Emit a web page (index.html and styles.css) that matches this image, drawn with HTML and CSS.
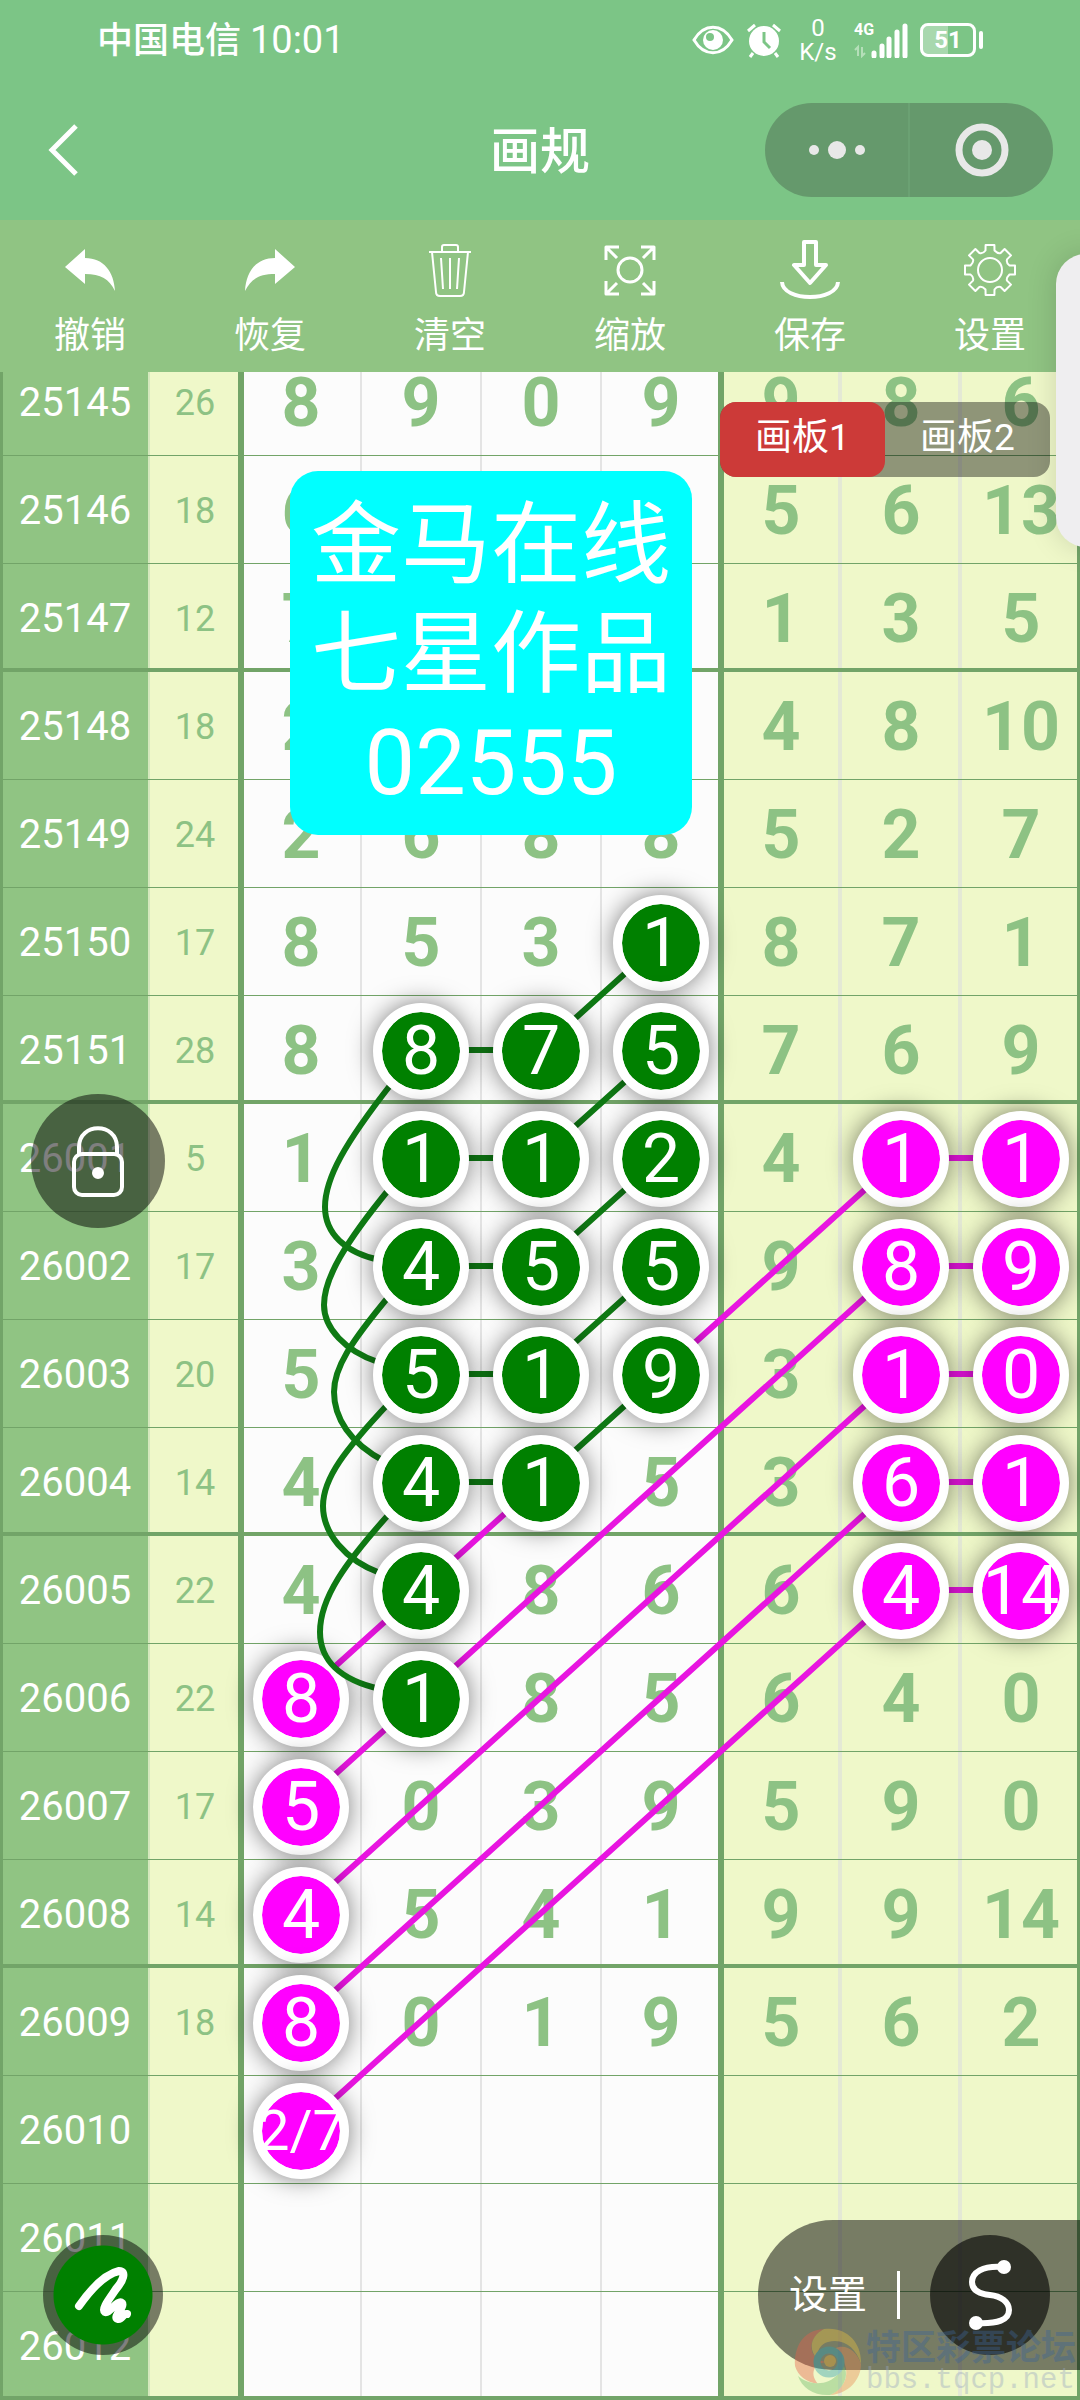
FILE: index.html
```html
<!doctype html>
<html lang="zh-CN">
<head>
  <meta charset="utf-8">
  <meta name="viewport" content="width=device-width">
  <title>画规</title>
  <link rel="stylesheet" href="styles.css">
</head>
<body>

<div class="page">
  <header class="header">
    <div class="status">
      <div class="carrier"><b>中国电信</b> <span>10:01</span></div>
      <div class="status-icons">
        <svg width="42" height="34" viewBox="0 0 42 34">
          <path d="M2 17C12 0 30 0 40 17C30 34 12 34 2 17Z" fill="none" stroke="#fff" stroke-width="3"/>
          <circle cx="21" cy="17" r="10" fill="#fff"/>
          <circle cx="18" cy="14" r="4" fill="#7cc586"/>
        </svg>
        <svg width="36" height="36" viewBox="0 0 36 36">
          <circle cx="18" cy="19" r="15" fill="#fff"/>
          <path d="M2 9L9 3M34 9L27 3M7 31L4 35M29 31L32 35" stroke="#fff" stroke-width="3"/>
          <path d="M18 10V20L24 26" fill="none" stroke="#7cc586" stroke-width="3"/>
        </svg>
        <div class="speed"><span>0</span><span>K/s</span></div>
        <div class="signal">
          <span>4G</span>
          <svg width="54" height="36" viewBox="0 0 54 36">
            <path d="M20 34V31M28 34V24M35 34V17M43 34V10M51 34V4" stroke="#fff" stroke-width="5" stroke-linecap="round"/>
            <path d="M4 34V25L1 28M8 25V34L11 31" fill="none" stroke="#b5dfb9" stroke-width="2"/>
          </svg>
        </div>
        <div class="battery"><span>51</span></div>
      </div>
    </div>
    <div class="navbar">
      <button class="back" aria-label="返回">
        <svg width="32" height="52" viewBox="0 0 32 52"><path d="M29 2L5 26L29 50" fill="none" stroke="#fff" stroke-width="5"/></svg>
      </button>
      <h1>画规</h1>
      <div class="capsule">
        <button aria-label="更多">
          <svg width="60" height="54" viewBox="0 0 60 54" fill="#e8e8e8"><circle cx="7" cy="27" r="5"/><circle cx="30" cy="27" r="9"/><circle cx="53" cy="27" r="5"/></svg>
        </button>
        <button aria-label="关闭">
          <svg width="54" height="54" viewBox="0 0 54 54"><circle cx="27" cy="27" r="23" fill="none" stroke="#e8e8e8" stroke-width="7"/><circle cx="27" cy="27" r="10" fill="#e8e8e8"/></svg>
        </button>
      </div>
    </div>
  </header>

  <nav class="toolbar">
    <button>
      <svg viewBox="0 0 60 60"><path d="M5 27L25 9V18C44 18 54 32 55 51C49 39 41 34 25 34V44Z" fill="#fff"/></svg>
      撤销
    </button>
    <button>
      <svg viewBox="0 0 60 60"><path d="M55 27L35 9V18C16 18 6 32 5 51C11 39 19 34 35 34V44Z" fill="#fff"/></svg>
      恢复
    </button>
    <button>
      <svg viewBox="0 0 60 60" class="line">
        <path d="M9 12H51M22 12V7Q22 5 24 5H36Q38 5 38 7V12M12 12L16 52Q16 56 20 56H40Q44 56 44 52L48 12M21 18L23 49M30 18V49M39 18L37 49"/>
      </svg>
      清空
    </button>
    <button>
      <svg viewBox="0 0 60 60" class="line mid">
        <circle cx="30" cy="30" r="12"/>
        <path d="M6 20V7H19M7 8L17 18M41 7H54V20M53 8L43 18M6 41V54H19M7 53L17 43M41 54H54V41M53 53L43 43"/>
      </svg>
      缩放
    </button>
    <button>
      <svg viewBox="0 0 60 60" class="line bold">
        <path d="M24 2H36V25H46L30 43L14 25H24ZM2 42C3 62 57 62 58 42"/>
      </svg>
      保存
    </button>
    <button>
      <svg viewBox="0 0 60 60" class="line">
        <circle cx="30" cy="30" r="12"/>
        <path d="M25.5 10.5L25.6 5H34.4L34.5 10.5Q38 14 40.6 13L44.6 9L51 15.4L47 19.4Q46 23 49.5 25.5L55 25.6V34.4L49.5 34.5Q46 38 47 40.6L51 44.6L44.6 51L40.6 47Q37 46 34.5 49.5L34.4 55H25.6L25.5 49.5Q22 46 19.4 47L15.4 51L9 44.6L13 40.6Q14 37 10.5 34.5L5 34.4V25.6L10.5 25.5Q14 22 13 19.4L9 15.4L15.4 9L19.4 13Q23 14 25.5 10.5Z"/>
      </svg>
      设置
    </button>
  </nav>

  <main class="board">
    <div class="sheet">
      <table>
        <colgroup>
          <col class="col-issue"><col class="col-sum">
          <col><col><col><col><col><col><col>
        </colgroup>
        <tbody id="rows"></tbody>
      </table>
      <svg class="lines pink" viewBox="0 0 1080 2052" preserveAspectRatio="none">
        <path d="M900 810H1020M900 918H1020M900 1026H1020M900 1134H1020M900 1242H1020"/>
        <path d="M900 810L660 1026M540 1134L300 1350M900 918L300 1458M900 1026L300 1566M900 1134L300 1674M900 1242L300 1782"/>
      </svg>
      <svg class="lines green" viewBox="0 0 1080 2052" preserveAspectRatio="none">
        <path d="M420 702H540M420 810H540M420 918H540M420 1026H540M420 1134H540"/>
        <path d="M660 594L540 702M660 702L540 810M660 810L540 918M660 918L540 1026M660 1026L540 1134"/>
        <path d="M392 735C345 795 325 830 325 859C325 885 345 905 380 912"/>
        <path d="M390 840C345 895 324 930 324 957C324 980 345 1003 378 1014"/>
        <path d="M390 947C350 995 334 1020 334 1044C334 1070 350 1095 384 1113"/>
        <path d="M389 1055C345 1102 323 1130 323 1158C323 1185 345 1212 380 1225"/>
        <path d="M390 1165C345 1215 320 1250 320 1284C320 1312 340 1332 380 1341"/>
      </svg>
    </div>

    <div class="note">金马在线<br>七星作品<br>02555</div>

    <div class="tabs">
      <button class="active">画板1</button>
      <button>画板2</button>
    </div>

    <button class="lock" aria-label="锁定">
      <svg width="134" height="134" viewBox="0 0 134 134" class="line bold">
        <rect x="43" y="60" width="48" height="41" rx="8"/>
        <path d="M48 60V53C48 28 86 28 86 53V60"/>
        <circle cx="67" cy="79" r="4" fill="#fff"/>
      </svg>
    </button>

    <button class="pen" aria-label="画笔">
      <svg width="120" height="120" viewBox="0 0 120 120">
        <path d="M36 71C48 54 62 39 76 36C84 36 80 46 73 54C67 63 58 74 62 77C66 79 75 64 79 68C82 72 69 82 75 84C79 85 80 78 84 79" fill="none" stroke="#fff" stroke-width="8" stroke-linecap="round" stroke-linejoin="round"/>
      </svg>
    </button>

    <div class="settings">
      <button class="settings-text">设置</button>
      <button class="curve" aria-label="曲线">
        <svg width="120" height="120" viewBox="0 0 120 120">
          <path d="M74 32C52 30 42 38 42 47C42 56 50 59 60 60C71 61 79 67 79 75C79 85 68 89 46 88" fill="none" stroke="#fff" stroke-width="6"/>
          <circle cx="74" cy="32" r="7" fill="#fff"/>
          <circle cx="46" cy="88" r="7" fill="#fff"/>
        </svg>
      </button>
    </div>

    <div class="watermark">
      <svg width="68" height="68" viewBox="0 0 68 68">
        <path d="M34 34C16 34 10 12 30 1C8 2 0 20 1 38C4 48 12 54 24 56C14 44 22 34 34 34Z" fill="#e8604a"/>
        <path d="M30 1C52 -2 68 14 67 36C62 20 50 10 34 14C26 16 22 24 24 32C14 22 16 8 30 1Z" fill="#e9c040"/>
        <path d="M67 36C67 52 54 66 36 67C50 60 56 48 50 34C47 26 40 23 34 26C46 12 62 20 67 36Z" fill="#e88a50"/>
        <path d="M36 67C20 68 8 60 4 48C16 58 34 58 44 46C48 40 46 34 42 32C58 38 54 60 36 67Z" fill="#6cb86a"/>
        <circle cx="35" cy="34" r="12" fill="none" stroke="#2e9fb0" stroke-width="7"/>
        <circle cx="36" cy="33" r="6" fill="#f0b030"/>
      </svg>
      <div><b>特区彩票论坛</b><span>bbs.tqcp.net</span></div>
    </div>
  </main>

  <div class="drawer"></div>
</div>

<script>
  // g = 绿色圆圈, p = 粉色圆圈, - = 空
  const data = [
    ['25145', 26, '8 9 0 9 9 8 6'],
    ['25146', 18, '6 - - - 5 6 13'],
    ['25147', 12, '7 - - - 1 3 5'],
    ['25148', 18, '2 - - - 4 8 10'],
    ['25149', 24, '2 6 8 8 5 2 7'],
    ['25150', 17, '8 5 3 g1 8 7 1'],
    ['25151', 28, '8 g8 g7 g5 7 6 9'],
    ['26001', 5, '1 g1 g1 g2 4 p1 p1'],
    ['26002', 17, '3 g4 g5 g5 9 p8 p9'],
    ['26003', 20, '5 g5 g1 g9 3 p1 p0'],
    ['26004', 14, '4 g4 g1 5 3 p6 p1'],
    ['26005', 22, '4 g4 8 6 6 p4 p14'],
    ['26006', 22, 'p8 g1 8 5 6 4 0'],
    ['26007', 17, 'p5 0 3 9 5 9 0'],
    ['26008', 14, 'p4 5 4 1 9 9 14'],
    ['26009', 18, 'p8 0 1 9 5 6 2'],
    ['26010', '', 'p2/7 - - - - - -'],
    ['26011', '', '- - - - - - -'],
    ['26012', '', '- - - - - - -']
  ]
  const thick = ['25147', '25151', '26004', '26008', '26012']

  function cell(value) {
    if (value === '-') return '<td></td>'
    const kind = { g: 'green', p: 'pink' }[value[0]]
    if (!kind) return `<td>${value}</td>`
    const text = value.slice(1)
    const small = text.includes('/') ? ' small' : ''
    return `<td><span class="mark ${kind}${small}">${text}</span></td>`
  }

  document.getElementById('rows').innerHTML = data.map(([issue, sum, nums]) => `
    <tr class="${thick.includes(issue) ? 'thick' : ''}">
      <th scope="row">${issue}</th>
      <td class="sum">${sum}</td>
      ${nums.split(' ').map(cell).join('')}
    </tr>
  `).join('')
</script>

</body>
</html>
```
FILE: styles.css
```css
* {
  box-sizing: border-box;
}
body {
  margin: 0;
  font-family: Roboto, "Noto Sans CJK SC", sans-serif;
  color: #fff;
}
button {
  border: 0;
  padding: 0;
  background: none;
  color: inherit;
  font: inherit;
}
svg {
  display: block;
}
.line {
  fill: none;
  stroke: #fff;
  stroke-width: 2;
  stroke-linejoin: round;
}
.line.mid {
  stroke-width: 3;
}
.line.bold {
  stroke-width: 4;
}
.page {
  position: relative;
  height: 100vh;
  display: flex;
  flex-direction: column;
  overflow: hidden;
}

/* header */
.header {
  height: 220px;
  background: #7cc586;
}
.status {
  height: 80px;
  padding: 0 97px;
  display: flex;
  align-items: center;
  justify-content: space-between;
}
.carrier {
  font-size: 36px;
  line-height: 44px;
}
.carrier b {
  font-weight: 500;
}
.carrier span {
  font-size: 38px;
}
.status-icons {
  display: flex;
  align-items: center;
  gap: 12px;
}
.speed {
  width: 48px;
  display: flex;
  flex-direction: column;
  align-items: center;
  font-size: 24px;
  line-height: 24px;
}
.signal {
  position: relative;
}
.signal span {
  position: absolute;
  left: 0;
  top: 0;
  font-size: 16px;
  line-height: 16px;
  font-weight: 700;
}
.battery {
  position: relative;
  width: 56px;
  height: 34px;
  margin-right: 7px;
  border: 3px solid #fff;
  border-radius: 8px;
  background: linear-gradient(90deg, #a8d8ae 50%, transparent 50%);
  font-size: 24px;
  line-height: 28px;
  font-weight: 700;
  text-align: center;
}
.battery::after {
  content: "";
  position: absolute;
  right: -10px;
  top: 5px;
  width: 4px;
  height: 18px;
  border-radius: 2px;
  background: #fff;
}
.navbar {
  height: 140px;
  padding: 0 27px;
  display: grid;
  grid-template-columns: 1fr auto 1fr;
  align-items: center;
}
.back {
  justify-self: start;
  padding-left: 20px;
}
h1 {
  margin: 0;
  padding-top: 4px;
  font-size: 50px;
  line-height: 64px;
  font-weight: 500;
}
.capsule {
  justify-self: end;
  width: 288px;
  height: 94px;
  border-radius: 47px;
  background: #65996c;
  display: flex;
}
.capsule button {
  flex: 1;
  display: flex;
  align-items: center;
  justify-content: center;
}
.capsule button + button {
  border-left: 2px solid #6ba173;
}

/* toolbar */
.toolbar {
  height: 152px;
  background: #90c483;
  display: flex;
}
.toolbar button {
  flex: 1;
  display: flex;
  flex-direction: column;
  align-items: center;
  padding-top: 20px;
  gap: 10px;
  font-size: 36px;
  line-height: 52px;
}
.toolbar svg {
  width: 60px;
  height: 60px;
}

/* table */
.board {
  position: relative;
  flex: 1;
  min-height: 0;
  overflow: hidden;
  display: flex;
  flex-direction: column;
  justify-content: flex-end;
}
.sheet {
  position: relative;
  z-index: 0;
  flex-shrink: 0;
}
table {
  width: 100%;
  table-layout: fixed;
  border-collapse: separate;
  border-spacing: 0;
}
.col-issue {
  width: 148px;
}
.col-sum {
  width: 92px;
}
tr {
  --h: -1px;
}
tr.thick {
  --h: -4px;
}
th, td {
  height: 108px;
  padding: 2px 0 0 2px;
  text-align: center;
  white-space: nowrap;
}
th {
  background: #90c483;
  font-size: 40px;
  line-height: 48px;
  font-weight: 400;
  box-shadow: inset 3px 0 #72a468, inset 0 var(--h) #72a468;
}
td {
  background: #fcfcfc;
  color: #8dc284;
  font-size: 68px;
  line-height: 76px;
  font-weight: 700;
  box-shadow: inset 0 var(--h) #72a468, inset 2px 0 #e4e4e4;
}
td.sum {
  background: #eff8c9;
  font-size: 36px;
  line-height: 44px;
  font-weight: 400;
  box-shadow: inset -2px 0 #72a468, inset 0 var(--h) #72a468, inset 2px 0 #d5e8bd;
}
td:nth-child(3) {
  box-shadow: inset 4px 0 #72a468, inset 0 var(--h) #72a468;
}
td:nth-child(6) {
  box-shadow: inset -2px 0 #72a468, inset 0 var(--h) #72a468, inset 2px 0 #e4e4e4;
}
td:nth-child(n+7) {
  background: #eff8c9;
  box-shadow: inset 0 var(--h) #72a468, inset 2px 0 #e4e9d5, inset -2px 0 #e4e9d5;
}
td:nth-child(7) {
  box-shadow: inset 4px 0 #72a468, inset 0 var(--h) #72a468, inset -2px 0 #e4e9d5;
}
td:nth-child(9) {
  box-shadow: inset -3px 0 #72a468, inset 0 var(--h) #72a468, inset 2px 0 #e4e9d5;
}

/* drawing */
.mark {
  position: relative;
  width: 96px;
  height: 96px;
  margin: 0 auto;
  border: 9px solid #fff;
  border-radius: 50%;
  box-shadow: 0 0 24px rgba(0, 0, 0, 0.5);
  display: flex;
  align-items: center;
  justify-content: center;
  color: #fff;
  font-weight: 400;
}
.mark.green {
  z-index: 4;
  background: #008000;
  background-clip: padding-box;
}
.mark.pink {
  z-index: 2;
  background: #ff00ff;
  background-clip: padding-box;
}
.mark.small {
  font-size: 56px;
}
.lines {
  position: absolute;
  left: 0;
  top: 0;
  width: 100%;
  height: 100%;
  fill: none;
  stroke-width: 6;
}
.lines.pink {
  z-index: 1;
  stroke: #e815e0;
}
.lines.green {
  z-index: 3;
  stroke: #0f7a14;
}

/* floating controls */
.note {
  position: absolute;
  left: 290px;
  top: 99px;
  padding: 20px 21px 17px;
  border-radius: 28px;
  background: #00ffff;
  font-size: 90px;
  line-height: 109px;
  text-align: center;
}
.tabs {
  position: absolute;
  right: 30px;
  top: 30px;
  display: flex;
  border-radius: 16px;
  background: rgba(0, 0, 0, 0.4);
}
.tabs button {
  width: 165px;
  height: 75px;
  padding-bottom: 4px;
  border-radius: 16px;
  font-size: 37px;
  line-height: 44px;
}
.tabs .active {
  background: #cc3a38;
}
.lock {
  position: absolute;
  left: 31px;
  top: 722px;
  border-radius: 50%;
  background: rgba(0, 0, 0, 0.5);
}
.pen {
  position: absolute;
  left: 43px;
  bottom: 45px;
  border-radius: 50%;
  background: radial-gradient(circle, #008000 49px, rgba(0, 0, 0, 0.5) 50px);
}
.settings {
  position: absolute;
  right: 0;
  bottom: 30px;
  height: 150px;
  padding: 0 30px 0 31px;
  border-radius: 75px 0 0 75px;
  background: rgba(0, 0, 0, 0.5);
  display: flex;
  align-items: center;
}
.settings-text {
  height: 48px;
  padding-right: 30px;
  margin-right: 30px;
  border-right: 3px solid #fff;
  font-size: 39px;
  line-height: 48px;
}
.curve {
  border-radius: 50%;
  background: rgba(0, 0, 0, 0.6);
}
.watermark {
  position: absolute;
  right: 4px;
  bottom: 4px;
  display: flex;
  align-items: center;
  gap: 4px;
  opacity: 0.4;
  color: #3c6496;
}
.watermark div {
  display: flex;
  flex-direction: column;
}
.watermark b {
  font-size: 35px;
  line-height: 38px;
}
.watermark span {
  color: #9aa7c0;
  font-family: "Liberation Mono", monospace;
  font-size: 29px;
  line-height: 26px;
}
.drawer {
  position: absolute;
  right: -36px;
  top: 254px;
  width: 60px;
  height: 293px;
  border-radius: 40px;
  background: #efeef0;
  box-shadow: 0 0 30px rgba(0, 0, 0, 0.15);
}
```
